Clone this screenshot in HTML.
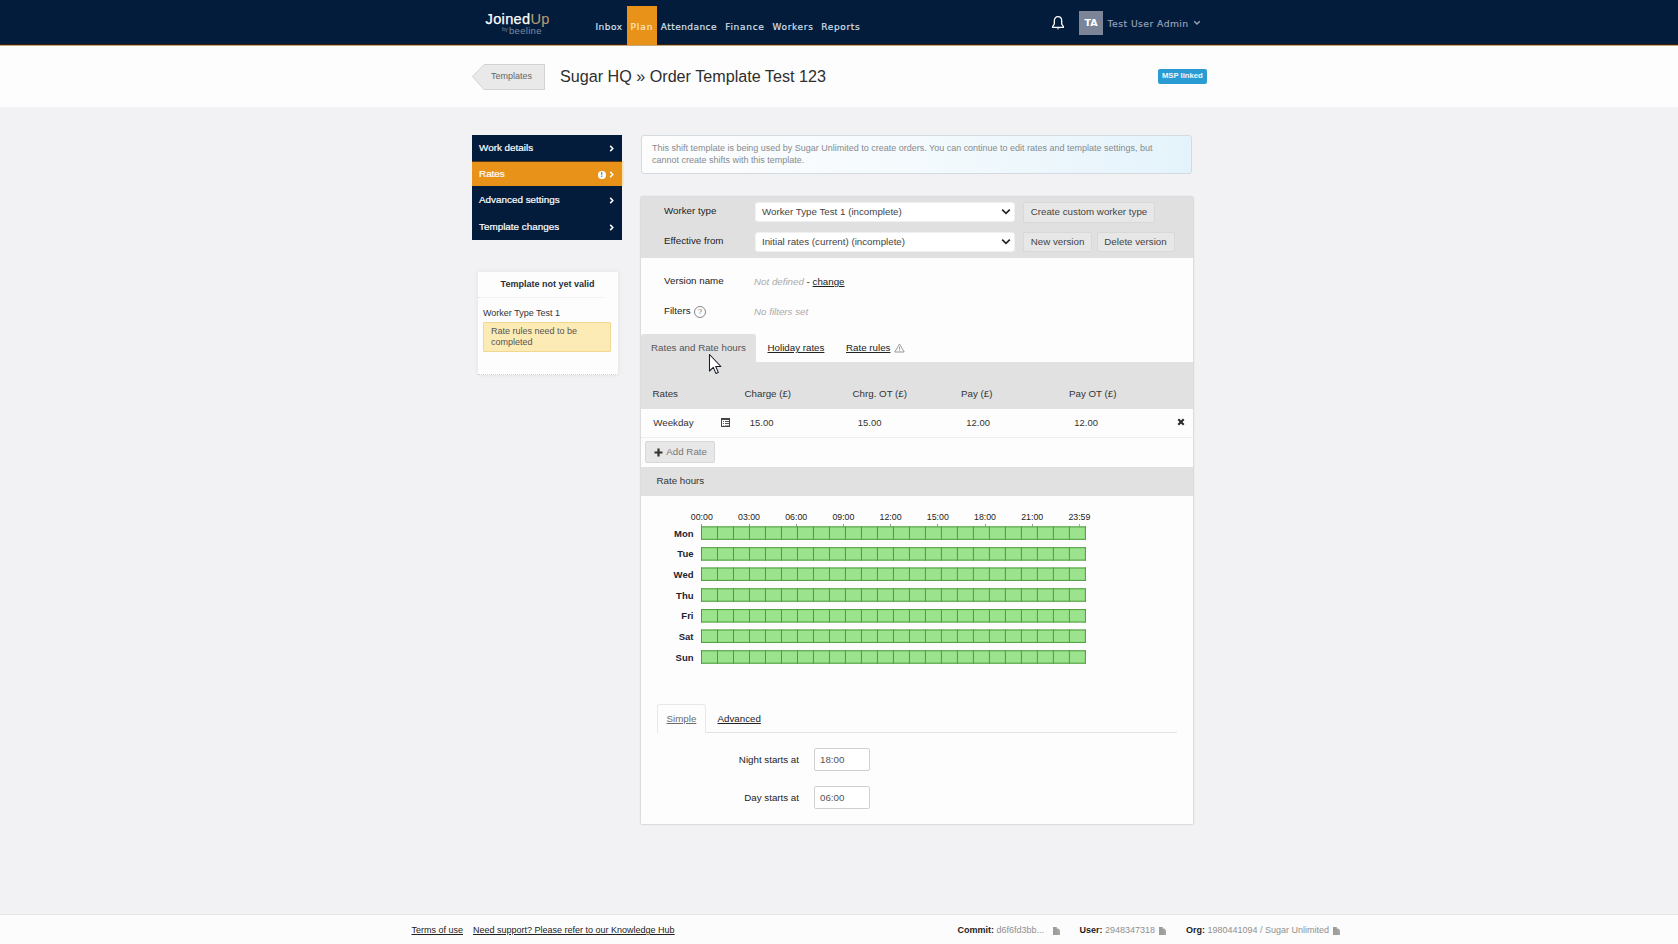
<!DOCTYPE html>
<html lang="en">
<head>
<meta charset="utf-8">
<title>Sugar HQ » Order Template Test 123</title>
<style>
*{box-sizing:border-box;margin:0;padding:0}
html,body{width:1678px;height:944px;overflow:hidden}
body{background:#f2f2f4;font-family:"Liberation Sans",Arial,sans-serif;font-size:9.75px;color:#333;position:relative}
a{color:#222;text-decoration:underline}
.abs{position:absolute}
.t{position:absolute;white-space:nowrap;line-height:12px}
/* header */
#hdr{position:absolute;left:0;top:0;width:1678px;height:45px;background:#041c3c;border-bottom:1px solid #3a2109}
#hdr .nav{position:absolute;z-index:4;top:0;-webkit-text-stroke:.15px currentColor;font-family:"DejaVu Sans",Verdana,sans-serif;font-size:9px;color:#dde3ee;line-height:12px;white-space:nowrap}
#plan{position:absolute;left:627px;top:6px;width:30px;height:39.4px;z-index:3;background:#e8921a}
#sub{position:absolute;left:0;top:45px;width:1678px;height:62.6px;background:#fdfdfd;border-top:1px solid #c4a67f;border-bottom:1px solid #f4f4f5}
/* side menu */
.mi{position:absolute;left:472px;width:150px;height:26.3px;background:#041c3c;color:#fff;font-size:9.9px;line-height:26px;padding-left:7px;white-space:nowrap;-webkit-text-stroke:.2px #fff}
.mi.on{background:#e8921a}
.mi svg{position:absolute;right:7.7px;top:9.4px}
/* panels */
#panel{position:absolute;left:641px;top:197px;width:552px;height:627px;background:#fdfdfd;box-shadow:0 0 2px rgba(0,0,0,.28)}
.band{position:absolute;left:0;width:552px;background:#e1e1e1}
.btn{position:absolute;height:21px;border:1px solid #d8d8d8;border-radius:2px;background:#e7e7e7;color:#444;font-size:9.75px;line-height:17.600px;text-align:center;white-space:nowrap}
.sel{position:absolute;height:21px;width:262px;border:1px solid #f0f0f0;border-radius:3px;background:#fff;color:#444;font-size:9.75px;line-height:17.400px;padding-left:6.300px;white-space:nowrap}
.inp{position:absolute;height:22.400px;width:56px;margin-top:-.1px;border:1px solid #d0d0d0;border-radius:2px;background:#fff;color:#555;font-size:9.75px;line-height:21px;padding-left:5px}
#foot{position:absolute;left:0;top:914px;width:1678px;height:30px;background:#fcfcfc;border-top:1px solid #e6e6e6;font-size:9px}
</style>
</head>
<body>
<div id="hdr">
  <div id="plan"></div>
  <div class="t" id="logo1" style="left:485.600px;top:9.800px;font-size:14.600px;line-height:18px;color:#fff;letter-spacing:.3px"><span style="-webkit-text-stroke:.25px #fff">Joined</span><span style="color:#b39b73;-webkit-text-stroke:.15px #b39b73">Up</span></div>
  <div class="t" id="logo2" style="left:502px;top:25.300px;font-size:9.500px;line-height:12px;color:#7f8aa0;letter-spacing:.3px"><span style="font-size:5.500px;position:relative;top:-3px;letter-spacing:0">by</span><span style="margin-left:1.200px">beeline</span></div>
  <div class="nav" style="left:595.4px;top:21.1px;letter-spacing:0.54px">Inbox</div>
  <div class="nav" style="left:630.5px;top:21.1px;color:#fde9c8;letter-spacing:0.93px">Plan</div>
  <div class="nav" style="left:660.8px;top:21.1px;letter-spacing:0.44px">Attendance</div>
  <div class="nav" style="left:725.2px;top:21.1px;letter-spacing:0.7px">Finance</div>
  <div class="nav" style="left:772.4px;top:21.1px;letter-spacing:0.68px">Workers</div>
  <div class="nav" style="left:821.2px;top:21.1px;letter-spacing:0.67px">Reports</div>
  <svg class="abs" style="left:1051px;top:15px" width="14" height="16" viewBox="0 0 14 16"><path d="M7 1.6c-2.3 0-3.7 1.8-3.7 4.2v3.2L1.6 11.6v.7h10.8v-.7L10.7 9V5.8C10.700 3.400 9.300 1.600 7 1.600z" fill="none" stroke="#fff" stroke-width="1.3" stroke-linejoin="round"/><path d="M5.600 13.400a1.500 1.500 0 0 0 2.800 0z" fill="#fff"/></svg>
  <div class="abs" style="left:1079px;top:11px;width:24px;height:24px;background:#7c8597"></div>
  <div class="t" style="left:1079px;top:17px;width:24px;text-align:center;font-family:'DejaVu Sans',sans-serif;font-weight:bold;font-size:9.5px;color:#fff">TA</div>
  <div class="nav" style="left:1107.6px;top:18.1px;font-size:9.2px;letter-spacing:.46px;color:#9ba6bb">Test User Admin</div>
  <svg class="abs" style="left:1193px;top:20px" width="8" height="6" viewBox="0 0 8 6"><path d="M1.2 1.200l2.800 2.800 2.800-2.800" fill="none" stroke="#9aa3b5" stroke-width="1.4"/></svg>
</div>
<div id="sub">
  <svg class="abs" style="left:471px;top:16.7px" width="76" height="28" viewBox="0 0 76 28"><path d="M1.5 13.500L13 1.500H73.500V26.500H13z" fill="#e9e9e9" stroke="#d2d2d2" stroke-width="1"/></svg>
  <div class="t" style="left:491px;top:23.8px;font-size:9px;color:#666">Templates</div>
  <div class="t" id="title" style="left:560px;top:19.9px;font-size:16.15px;line-height:20px;color:#2e2e2e">Sugar HQ » Order Template Test 123</div>
  <div class="abs" style="left:1158.2px;top:23.1px;width:48.4px;height:14.6px;background:#2b9bd3;border-radius:2px"></div>
  <div class="t" style="left:1158.2px;top:24.3px;width:48.4px;text-align:center;font-size:7.7px;font-weight:bold;color:#f2f8fc">MSP linked</div>
</div>
<div class="mi" style="top:135px;height:26.250px;line-height:25.200px">Work details<svg style="top:10.1px" width="5" height="7" viewBox="0 0 5 7"><path d="M1.2 .9l2.600 2.600-2.600 2.600" fill="none" stroke="#fff" stroke-width="1.500"/></svg></div>
<div class="abs" style="left:621.800px;top:161.250px;width:2.200px;height:24px;background:#fbe6b4"></div>
<div class="mi on" style="top:161.250px;height:25.600px;line-height:24.900px;border-bottom:1px solid #d9cdb6;border-top:.5px solid #5a3a12">Rates<span class="abs" style="left:125.700px;top:8.500px;width:8px;height:8.400px;border-radius:50%;background:#fff;color:#7a6240;font-size:7px;font-weight:bold;line-height:8.400px;text-align:center;padding:0;-webkit-text-stroke:0">!</span><svg style="top:9.100px" width="5" height="7" viewBox="0 0 5 7"><path d="M1.2 .9l2.600 2.600-2.600 2.600" fill="none" stroke="#fff" stroke-width="1.500"/></svg></div>
<div class="mi" style="top:186.400px;height:26.600px;line-height:27.500px">Advanced settings<svg style="top:10.7px" width="5" height="7" viewBox="0 0 5 7"><path d="M1.2 .9l2.600 2.600-2.600 2.600" fill="none" stroke="#fff" stroke-width="1.500"/></svg></div>
<div class="mi" style="top:213px;height:26.600px;line-height:28.600px">Template changes<svg style="top:10.9px" width="5" height="7" viewBox="0 0 5 7"><path d="M1.2 .9l2.600 2.600-2.600 2.600" fill="none" stroke="#fff" stroke-width="1.500"/></svg></div>
<div id="valid" class="abs" style="left:477.500px;top:272px;width:140px;height:103px;background:#fdfdfd;box-shadow:0 0 5px rgba(0,0,0,.07);border-bottom:1.500px dotted #d4d4d8">
  <div class="abs" style="left:0;top:25px;width:126px;border-top:1px dotted #e6e6e6"></div>
  <div class="t" style="left:0;top:6px;width:140px;text-align:center;font-size:9px;font-weight:bold;color:#2a2f3a">Template not yet valid</div>
  <div class="t" style="left:5.500px;top:34.500px;font-size:9px;color:#333">Worker Type Test 1</div>
  <div class="abs" style="left:5.500px;top:50px;width:128px;height:30px;background:#fdebb5;border:1px solid #f2d793;border-radius:1px"></div>
  <div class="t" style="left:13.500px;top:53.500px;font-size:9px;line-height:11px;color:#555;white-space:normal;width:110px">Rate rules need to be completed</div>
</div>
<div id="info" class="abs" style="left:640.500px;top:135px;width:551.500px;height:38.500px;border:1px solid #d4dbe0;border-radius:3px;background:linear-gradient(90deg,#fdfdfd 0%,#f4fafd 50%,#e4f3fb 100%)">
  <div class="t" style="left:10.500px;top:6.050px;font-size:8.990px;line-height:12px;color:#858a90;white-space:normal;width:520px">This shift template is being used by Sugar Unlimited to create orders. You can continue to edit rates and template settings, but cannot create shifts with this template.</div>
</div>
<div id="panel">
<div class="band" style="top:0;height:60.5px;background:#e0e0e0"></div>
<div class="t" style="left:23px;top:8px;color:#222">Worker type</div>
<div class="sel" style="left:113.700px;top:5.200px;width:260.600px;height:20px">Worker Type Test 1 (incomplete)<svg class="abs" style="right:3.300px;top:5.300px" width="10" height="8" viewBox="0 0 10 8"><path d="M1.200 1.600l3.800 3.800 3.800-3.800" fill="none" stroke="#222" stroke-width="1.600"/></svg></div>
<div class="btn" style="left:382px;top:5px;width:132px;height:20.500px">Create custom worker type</div>
<div class="t" style="left:23px;top:38px;color:#222">Effective from</div>
<div class="sel" style="left:113.700px;top:34.500px;width:260.600px;height:20.500px">Initial rates (current) (incomplete)<svg class="abs" style="right:3.300px;top:5.300px" width="10" height="8" viewBox="0 0 10 8"><path d="M1.200 1.600l3.800 3.800 3.800-3.800" fill="none" stroke="#222" stroke-width="1.600"/></svg></div>
<div class="btn" style="left:382px;top:34.5px;width:69px;height:20.500px">New version</div>
<div class="btn" style="left:455.5px;top:34.5px;width:78px;height:20.500px">Delete version</div>
<div class="t" style="left:23px;top:78px;color:#222">Version name</div>
<div class="t" style="left:113px;top:79px;color:#222;font-size:9.750px"><i style="color:#aaa">Not defined</i> - <a>change</a></div>
<div class="t" style="left:23px;top:108px;color:#222">Filters</div>
<div class="abs" style="left:53px;top:109px;width:12px;height:12px;border:1px solid #888;border-radius:50%;font-size:8px;line-height:10px;text-align:center;color:#777">?</div>
<div class="t" style="left:113px;top:109px;color:#aaa;font-size:9.750px;font-style:italic">No filters set</div>
<div class="abs" style="left:0;top:136.5px;width:115px;height:30px;background:#e1e1e1;border-radius:3px 3px 0 0"></div>
<div class="t" style="left:10px;top:145px;color:#555">Rates and Rate hours</div>
<div class="t" style="left:126.5px;top:145px"><a>Holiday rates</a></div>
<div class="t" style="left:205px;top:145px"><a>Rate rules</a></div>
<svg class="abs" style="left:253px;top:145.5px" width="11" height="10" viewBox="0 0 11 10"><path d="M5.500 1L10.200 9H.8z" fill="none" stroke="#999" stroke-width="1" stroke-linejoin="round"/><path d="M5.500 3.800v2.800M5.500 7.400v.8" stroke="#999" stroke-width="1"/></svg>
<div class="band" style="top:165px;height:46.69999999999999px"></div>
<div class="t" style="left:11.5px;top:191px;color:#333;font-size:9.750px">Rates</div>
<div class="t" style="left:103.5px;top:191px;color:#333;font-size:9.750px">Charge (£)</div>
<div class="t" style="left:211.5px;top:191px;color:#333;font-size:9.750px">Chrg. OT (£)</div>
<div class="t" style="left:320px;top:191px;color:#333;font-size:9.750px">Pay (£)</div>
<div class="t" style="left:428px;top:191px;color:#333;font-size:9.750px">Pay OT (£)</div>
<div class="t" style="left:12.2px;top:219.800px;color:#333;font-size:9.750px">Weekday</div>
<div class="t" style="left:108.8px;top:219.800px;color:#333;font-size:9.450px">15.00</div>
<div class="t" style="left:216.8px;top:219.800px;color:#333;font-size:9.450px">15.00</div>
<div class="t" style="left:325.3px;top:219.800px;color:#333;font-size:9.450px">12.00</div>
<div class="t" style="left:433.3px;top:219.800px;color:#333;font-size:9.450px">12.00</div>
<svg class="abs" style="left:80px;top:221px" width="9" height="9" viewBox="0 0 9 9" shape-rendering="crispEdges"><rect x="0" y="0" width="9" height="9" fill="#444"/><rect x="1" y="2" width="7" height="6" fill="#fff"/><path d="M2 3.500h1M2 5.500h1M2 7.500h1M4 3.500h3.500M4 5.500h3.500M4 7.500h3.500" stroke="#555" stroke-width="1"/><rect x="1" y="7" width="7" height="1" fill="#fff" opacity=".45"/></svg>
<svg class="abs" style="left:536px;top:221.200px" width="8" height="8" viewBox="0 0 8 8"><path d="M1.300 1.300l5.400 5.400M6.700 1.300l-5.400 5.400" stroke="#2a2a2e" stroke-width="2.100"/></svg>
<div class="abs" style="left:0;top:239.5px;width:552px;border-top:1px solid #eeeeee"></div>
<div class="btn" style="left:4px;top:244.200px;width:69.500px;height:21.800px;color:#777;text-align:left;padding-left:20.300px;line-height:19.800px">Add Rate</div>
<svg class="abs" style="left:13px;top:251px" width="9" height="9" viewBox="0 0 9 9"><path d="M4.500 .5v8M.5 4.500h8" stroke="#333" stroke-width="2.200"/></svg>
<div class="band" style="top:269.8px;height:29.7px"></div>
<div class="t" style="left:15.5px;top:278px;color:#333">Rate hours</div>
<div class="t" style="left:40.80px;top:314.2px;width:40px;text-align:center;font-size:8.800px;color:#222">00:00</div>
<div class="abs" style="left:60.3px;top:326.5px;width:1px;height:3px;background:#999"></div>
<div class="t" style="left:88.00px;top:314.2px;width:40px;text-align:center;font-size:8.800px;color:#222">03:00</div>
<div class="abs" style="left:107.5px;top:326.5px;width:1px;height:3px;background:#999"></div>
<div class="t" style="left:135.20px;top:314.2px;width:40px;text-align:center;font-size:8.800px;color:#222">06:00</div>
<div class="abs" style="left:154.7px;top:326.5px;width:1px;height:3px;background:#999"></div>
<div class="t" style="left:182.40px;top:314.2px;width:40px;text-align:center;font-size:8.800px;color:#222">09:00</div>
<div class="abs" style="left:201.9px;top:326.5px;width:1px;height:3px;background:#999"></div>
<div class="t" style="left:229.60px;top:314.2px;width:40px;text-align:center;font-size:8.800px;color:#222">12:00</div>
<div class="abs" style="left:249.1px;top:326.5px;width:1px;height:3px;background:#999"></div>
<div class="t" style="left:276.80px;top:314.2px;width:40px;text-align:center;font-size:8.800px;color:#222">15:00</div>
<div class="abs" style="left:296.3px;top:326.5px;width:1px;height:3px;background:#999"></div>
<div class="t" style="left:324.00px;top:314.2px;width:40px;text-align:center;font-size:8.800px;color:#222">18:00</div>
<div class="abs" style="left:343.5px;top:326.5px;width:1px;height:3px;background:#999"></div>
<div class="t" style="left:371.20px;top:314.2px;width:40px;text-align:center;font-size:8.800px;color:#222">21:00</div>
<div class="abs" style="left:390.7px;top:326.5px;width:1px;height:3px;background:#999"></div>
<div class="t" style="left:418.40px;top:314.2px;width:40px;text-align:center;font-size:8.800px;color:#222">23:59</div>
<div class="abs" style="left:438.20px;top:326.5px;width:1px;height:3px;background:#aaa"></div>
<div class="t" style="left:12px;top:330.5px;width:40.500px;text-align:right;font-weight:bold;font-size:9.500px;color:#1c2333">Mon</div>
<div class="t" style="left:12px;top:351.17px;width:40.500px;text-align:right;font-weight:bold;font-size:9.500px;color:#1c2333">Tue</div>
<div class="t" style="left:12px;top:371.84px;width:40.500px;text-align:right;font-weight:bold;font-size:9.500px;color:#1c2333">Wed</div>
<div class="t" style="left:12px;top:392.51px;width:40.500px;text-align:right;font-weight:bold;font-size:9.500px;color:#1c2333">Thu</div>
<div class="t" style="left:12px;top:413.18px;width:40.500px;text-align:right;font-weight:bold;font-size:9.500px;color:#1c2333">Fri</div>
<div class="t" style="left:12px;top:433.85px;width:40.500px;text-align:right;font-weight:bold;font-size:9.500px;color:#1c2333">Sat</div>
<div class="t" style="left:12px;top:454.52px;width:40.500px;text-align:right;font-weight:bold;font-size:9.500px;color:#1c2333">Sun</div>
<svg class="abs" style="left:60.10px;top:329.00px" width="386" height="140" viewBox="0 0 386 140"><rect x="0" y="0.40" width="384.88" height="13.4" fill="#9be38c"/><path d="M0 0.90h384.88M0 13.30h384.88" stroke="#4f9a3f" stroke-width="1"/><rect x="0" y="21.20" width="384.88" height="13.4" fill="#9be38c"/><path d="M0 21.70h384.88M0 34.10h384.88" stroke="#4f9a3f" stroke-width="1"/><rect x="0" y="41.50" width="384.88" height="13.4" fill="#9be38c"/><path d="M0 42.00h384.88M0 54.40h384.88" stroke="#4f9a3f" stroke-width="1"/><rect x="0" y="62.30" width="384.88" height="13.4" fill="#9be38c"/><path d="M0 62.80h384.88M0 75.20h384.88" stroke="#4f9a3f" stroke-width="1"/><rect x="0" y="83.10" width="384.88" height="13.4" fill="#9be38c"/><path d="M0 83.60h384.88M0 96.00h384.88" stroke="#4f9a3f" stroke-width="1"/><rect x="0" y="103.50" width="384.88" height="13.4" fill="#9be38c"/><path d="M0 104.00h384.88M0 116.40h384.88" stroke="#4f9a3f" stroke-width="1"/><rect x="0" y="124.30" width="384.88" height="13.4" fill="#9be38c"/><path d="M0 124.80h384.88M0 137.20h384.88" stroke="#4f9a3f" stroke-width="1"/><path d="M0.50 0.40v13.4M16.49 0.40v13.4M32.49 0.40v13.4M48.48 0.40v13.4M64.48 0.40v13.4M80.47 0.40v13.4M96.47 0.40v13.4M112.46 0.40v13.4M128.46 0.40v13.4M144.45 0.40v13.4M160.45 0.40v13.4M176.44 0.40v13.4M192.44 0.40v13.4M208.44 0.40v13.4M224.43 0.40v13.4M240.42 0.40v13.4M256.42 0.40v13.4M272.41 0.40v13.4M288.41 0.40v13.4M304.40 0.40v13.4M320.40 0.40v13.4M336.39 0.40v13.4M352.39 0.40v13.4M368.38 0.40v13.4M384.38 0.40v13.4M0.50 21.20v13.4M16.49 21.20v13.4M32.49 21.20v13.4M48.48 21.20v13.4M64.48 21.20v13.4M80.47 21.20v13.4M96.47 21.20v13.4M112.46 21.20v13.4M128.46 21.20v13.4M144.45 21.20v13.4M160.45 21.20v13.4M176.44 21.20v13.4M192.44 21.20v13.4M208.44 21.20v13.4M224.43 21.20v13.4M240.42 21.20v13.4M256.42 21.20v13.4M272.41 21.20v13.4M288.41 21.20v13.4M304.40 21.20v13.4M320.40 21.20v13.4M336.39 21.20v13.4M352.39 21.20v13.4M368.38 21.20v13.4M384.38 21.20v13.4M0.50 41.50v13.4M16.49 41.50v13.4M32.49 41.50v13.4M48.48 41.50v13.4M64.48 41.50v13.4M80.47 41.50v13.4M96.47 41.50v13.4M112.46 41.50v13.4M128.46 41.50v13.4M144.45 41.50v13.4M160.45 41.50v13.4M176.44 41.50v13.4M192.44 41.50v13.4M208.44 41.50v13.4M224.43 41.50v13.4M240.42 41.50v13.4M256.42 41.50v13.4M272.41 41.50v13.4M288.41 41.50v13.4M304.40 41.50v13.4M320.40 41.50v13.4M336.39 41.50v13.4M352.39 41.50v13.4M368.38 41.50v13.4M384.38 41.50v13.4M0.50 62.30v13.4M16.49 62.30v13.4M32.49 62.30v13.4M48.48 62.30v13.4M64.48 62.30v13.4M80.47 62.30v13.4M96.47 62.30v13.4M112.46 62.30v13.4M128.46 62.30v13.4M144.45 62.30v13.4M160.45 62.30v13.4M176.44 62.30v13.4M192.44 62.30v13.4M208.44 62.30v13.4M224.43 62.30v13.4M240.42 62.30v13.4M256.42 62.30v13.4M272.41 62.30v13.4M288.41 62.30v13.4M304.40 62.30v13.4M320.40 62.30v13.4M336.39 62.30v13.4M352.39 62.30v13.4M368.38 62.30v13.4M384.38 62.30v13.4M0.50 83.10v13.4M16.49 83.10v13.4M32.49 83.10v13.4M48.48 83.10v13.4M64.48 83.10v13.4M80.47 83.10v13.4M96.47 83.10v13.4M112.46 83.10v13.4M128.46 83.10v13.4M144.45 83.10v13.4M160.45 83.10v13.4M176.44 83.10v13.4M192.44 83.10v13.4M208.44 83.10v13.4M224.43 83.10v13.4M240.42 83.10v13.4M256.42 83.10v13.4M272.41 83.10v13.4M288.41 83.10v13.4M304.40 83.10v13.4M320.40 83.10v13.4M336.39 83.10v13.4M352.39 83.10v13.4M368.38 83.10v13.4M384.38 83.10v13.4M0.50 103.50v13.4M16.49 103.50v13.4M32.49 103.50v13.4M48.48 103.50v13.4M64.48 103.50v13.4M80.47 103.50v13.4M96.47 103.50v13.4M112.46 103.50v13.4M128.46 103.50v13.4M144.45 103.50v13.4M160.45 103.50v13.4M176.44 103.50v13.4M192.44 103.50v13.4M208.44 103.50v13.4M224.43 103.50v13.4M240.42 103.50v13.4M256.42 103.50v13.4M272.41 103.50v13.4M288.41 103.50v13.4M304.40 103.50v13.4M320.40 103.50v13.4M336.39 103.50v13.4M352.39 103.50v13.4M368.38 103.50v13.4M384.38 103.50v13.4M0.50 124.30v13.4M16.49 124.30v13.4M32.49 124.30v13.4M48.48 124.30v13.4M64.48 124.30v13.4M80.47 124.30v13.4M96.47 124.30v13.4M112.46 124.30v13.4M128.46 124.30v13.4M144.45 124.30v13.4M160.45 124.30v13.4M176.44 124.30v13.4M192.44 124.30v13.4M208.44 124.30v13.4M224.43 124.30v13.4M240.42 124.30v13.4M256.42 124.30v13.4M272.41 124.30v13.4M288.41 124.30v13.4M304.40 124.30v13.4M320.40 124.30v13.4M336.39 124.30v13.4M352.39 124.30v13.4M368.38 124.30v13.4M384.38 124.30v13.4" stroke="#4f9a3f" stroke-width="1" fill="none"/></svg>
<div class="abs" style="left:15.5px;top:535px;width:520.5px;border-top:1px solid #e3e3e3"></div>
<div class="abs" style="left:15.500px;top:506.800px;width:49px;height:29.200px;border:1px solid #e8e8e8;border-bottom:0;border-radius:3px 3px 0 0;background:#fdfdfd"></div>
<div class="t" style="left:25.5px;top:516px;font-size:9.750px"><a style="color:#6c6c6c">Simple</a></div>
<div class="t" style="left:76.5px;top:516px;font-size:9.750px"><a>Advanced</a></div>
<div class="t" style="left:58px;top:556.5px;width:100px;text-align:right;color:#222;font-size:9.750px">Night starts at</div>
<div class="inp" style="left:173px;top:551.5px">18:00</div>
<div class="t" style="left:58px;top:594.5px;width:100px;text-align:right;color:#222;font-size:9.750px">Day starts at</div>
<div class="inp" style="left:173px;top:589.5px">06:00</div>
</div>
<svg class="abs" style="left:707.900px;top:352.600px" width="15" height="22" viewBox="0 0 15 22"><path d="M1.500 1.500v16.500l3.800-3.600 2.600 6 2.400-1-2.600-5.900h5.200z" fill="#fff" stroke="#161c2a" stroke-width="1.050" stroke-linejoin="round"/></svg>
<div id="foot">
  <div class="t" style="left:411.500px;top:9px;font-size:9px"><a>Terms of use</a></div>
  <div class="t" style="left:473px;top:9px;font-size:9px"><a>Need support? Please refer to our Knowledge Hub</a></div>
  <div class="t" style="left:957.500px;top:9px;font-size:9px;color:#909090"><b style="color:#222">Commit:</b> d6f6fd3bb...</div>
  <div class="t" style="left:1079.500px;top:9px;font-size:9px;color:#909090"><b style="color:#222">User:</b> 2948347318</div>
  <div class="t" style="left:1186px;top:9px;font-size:9px;color:#909090"><b style="color:#222">Org:</b> 1980441094 / Sugar Unlimited</div>
<svg width="8" height="8" viewBox="0 0 8 8" style="position:absolute;top:12px;left:1053px"><path d="M0 0h3.800v8H0z" fill="#9c9c99"/><path d="M2.700 1.600h2.600l1.700 1.700V8H2.700z" fill="#a6a6a3"/><path d="M3.800 2.600v5.400" stroke="#8a8a88" stroke-width=".5"/></svg><svg width="8" height="8" viewBox="0 0 8 8" style="position:absolute;top:12px;left:1159px"><path d="M0 0h3.800v8H0z" fill="#9c9c99"/><path d="M2.700 1.600h2.600l1.700 1.700V8H2.700z" fill="#a6a6a3"/><path d="M3.800 2.600v5.400" stroke="#8a8a88" stroke-width=".5"/></svg><svg width="8" height="8" viewBox="0 0 8 8" style="position:absolute;top:12px;left:1333px"><path d="M0 0h3.800v8H0z" fill="#9c9c99"/><path d="M2.700 1.600h2.600l1.700 1.700V8H2.700z" fill="#a6a6a3"/><path d="M3.800 2.600v5.400" stroke="#8a8a88" stroke-width=".5"/></svg>
</div>
</body>
</html>
